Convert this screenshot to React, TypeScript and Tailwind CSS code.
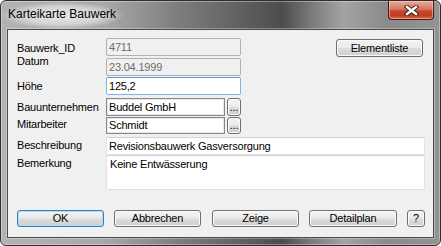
import React from 'react';

const font = "font-['Liberation_Sans',Arial,sans-serif]";

const btnBase =
  'flex items-center justify-center rounded-[3px] border text-[11px] leading-none tracking-[-0.2px] text-black bg-[linear-gradient(#f3f3f3_0%,#ebebeb_48%,#dddddd_52%,#cfcfcf_100%)]';
const btn = `${btnBase} border-[#707070] shadow-[inset_0_0_0_1px_#fbfbfb]`;
const btnDefault = `${btnBase} border-[#3c7fb1] shadow-[inset_0_0_0_1px_#a6e0f7]`;

function Label({ text, offset }: { text: string; offset: string }) {
  return (
    <div className={`w-[89px] h-[13px] shrink-0 text-[11px] leading-[13px] tracking-[-0.2px] text-black ${offset}`}>
      {text}
    </div>
  );
}

function Field({
  value,
  kind,
  width,
}: {
  value: string;
  kind: 'disabled' | 'focus' | 'sunken' | 'plain';
  width: string;
}) {
  const styles = {
    disabled: 'border-[#adb2b5] bg-[#f0f0f0] text-[#6d6d6d] rounded-[2px]',
    focus: 'border-[#7fb4e4] border-t-[#569de5] bg-white text-black rounded-[2px]',
    sunken: 'border-[#828790] bg-white text-black shadow-[inset_0_0_0_1px_#e8e8e8]',
    plain: 'border-[#e0e2e6] border-t-[#cfd2d6] bg-white text-black rounded-[2px]',
  }[kind];
  return (
    <div
      className={`h-full ${width} shrink-0 border ${styles} pl-[2px] text-[11px] leading-[13px] tracking-[-0.2px] flex items-center whitespace-nowrap overflow-hidden`}
    >
      {value}
    </div>
  );
}

function DotsButton() {
  return (
    <div className={`${btn} ml-[2px] h-full w-[14px] items-end pb-[2px] rounded-[2px]`}>...</div>
  );
}

export default function App() {
  return (
    <div className={`w-[441px] h-[246px] bg-white ${font}`}>
      <div className="relative flex h-full w-full flex-col rounded-[6px] border border-[#2f2f2f] bg-[linear-gradient(90deg,#b2b2b2_0%,#a8a8a8_24%,#7e7e7e_40%,#555555_60%,#4c4c4c_64%,#7c7c7c_71%,#a3a3a3_78%,#8a8a8a_88%,#939393_100%)] px-[6px] pb-[7px] shadow-[inset_0_0_0_1px_rgba(255,255,255,0.35)]">
        {/* title bar */}
        <div className="flex h-[28px] shrink-0 items-start">
          <span className="ml-[-7px] mt-[1px] rounded-[40%] bg-[radial-gradient(closest-side,rgba(235,235,235,0.95),rgba(225,225,225,0.75)_65%,rgba(200,200,200,0)_100%)] px-[8px] pt-[5px] pb-[7px] text-[12px] leading-[15px] text-black">
            Karteikarte Bauwerk
          </span>
          <div className="ml-auto flex h-[19px] w-[46px] items-center justify-center rounded-b-[4px] border border-t-0 border-[#4a1a12] bg-[linear-gradient(#e9a99b_0%,#d67863_45%,#c24a2f_55%,#c23c1f_80%,#d8684a_100%)] shadow-[inset_0_0_0_1px_rgba(255,220,210,0.5)]">
            <svg width="15" height="11" viewBox="0 0 15 11">
              <path d="M3 2 L12 9 M12 2 L3 9" stroke="#45211a" strokeWidth="4.4" strokeLinecap="square" />
              <path d="M3 2 L12 9 M12 2 L3 9" stroke="#ffffff" strokeWidth="2.4" strokeLinecap="square" />
            </svg>
          </div>
        </div>

        {/* client area */}
        <div className="flex flex-1 flex-col border border-[#4a4a4a] bg-[#f0f0f0] pl-[9px] pt-[8px] shadow-[0_0_0_1px_rgba(255,255,255,0.3)]">
          <div className="flex h-[18px] items-start">
            <Label text="Bauwerk_ID" offset="mt-[4px]" />
            <Field value="4711" kind="disabled" width="w-[135px]" />
            <div className={`${btn} ml-auto mr-[10px] mt-[1px] h-[18px] w-[87px]`}>Elementliste</div>
          </div>
          <div className="mt-[2px] flex h-[18px] items-start">
            <Label text="Datum" offset="-mt-[3px]" />
            <Field value="23.04.1999" kind="disabled" width="w-[135px]" />
          </div>
          <div className="mt-[1px] flex h-[18px] items-start">
            <Label text="Höhe" offset="mt-[3px]" />
            <Field value="125,2" kind="focus" width="w-[135px]" />
          </div>
          <div className="mt-[3px] flex h-[18px] items-start">
            <Label text="Bauunternehmen" offset="mt-[3px]" />
            <Field value="Buddel GmbH" kind="sunken" width="w-[119px]" />
            <DotsButton />
          </div>
          <div className="mt-[1px] flex h-[17px] items-start">
            <Label text="Mitarbeiter" offset="mt-[1px]" />
            <Field value="Schmidt" kind="sunken" width="w-[119px]" />
            <DotsButton />
          </div>
          <div className="mt-[3px] flex h-[18px] items-start">
            <Label text="Beschreibung" offset="mt-[2px]" />
            <Field value="Revisionsbauwerk Gasversorgung" kind="plain" width="w-[319px]" />
          </div>
          <div className="flex h-[35px] items-start">
            <Label text="Bemerkung" offset="mt-[2px]" />
            <div className="h-full w-[319px] rounded-[2px] border border-[#e0e2e6] border-t-[#cfd2d6] bg-white pl-[3px] pt-[2px] text-[11px] leading-[13px] tracking-[-0.2px] text-black">
              Keine Entwässerung
            </div>
          </div>

          <div className="mt-[20px] flex h-[17px] items-start">
            <div className={`${btnDefault} h-full w-[87px]`}>OK</div>
            <div className={`${btn} ml-[10px] h-full w-[87px]`}>Abbrechen</div>
            <div className={`${btn} ml-[11px] h-full w-[87px]`}>Zeige</div>
            <div className={`${btn} ml-[10px] h-full w-[88px]`}>Detailplan</div>
            <div className={`${btn} ml-[10px] h-full w-[18px]`}>?</div>
          </div>
        </div>
      </div>
    </div>
  );
}
